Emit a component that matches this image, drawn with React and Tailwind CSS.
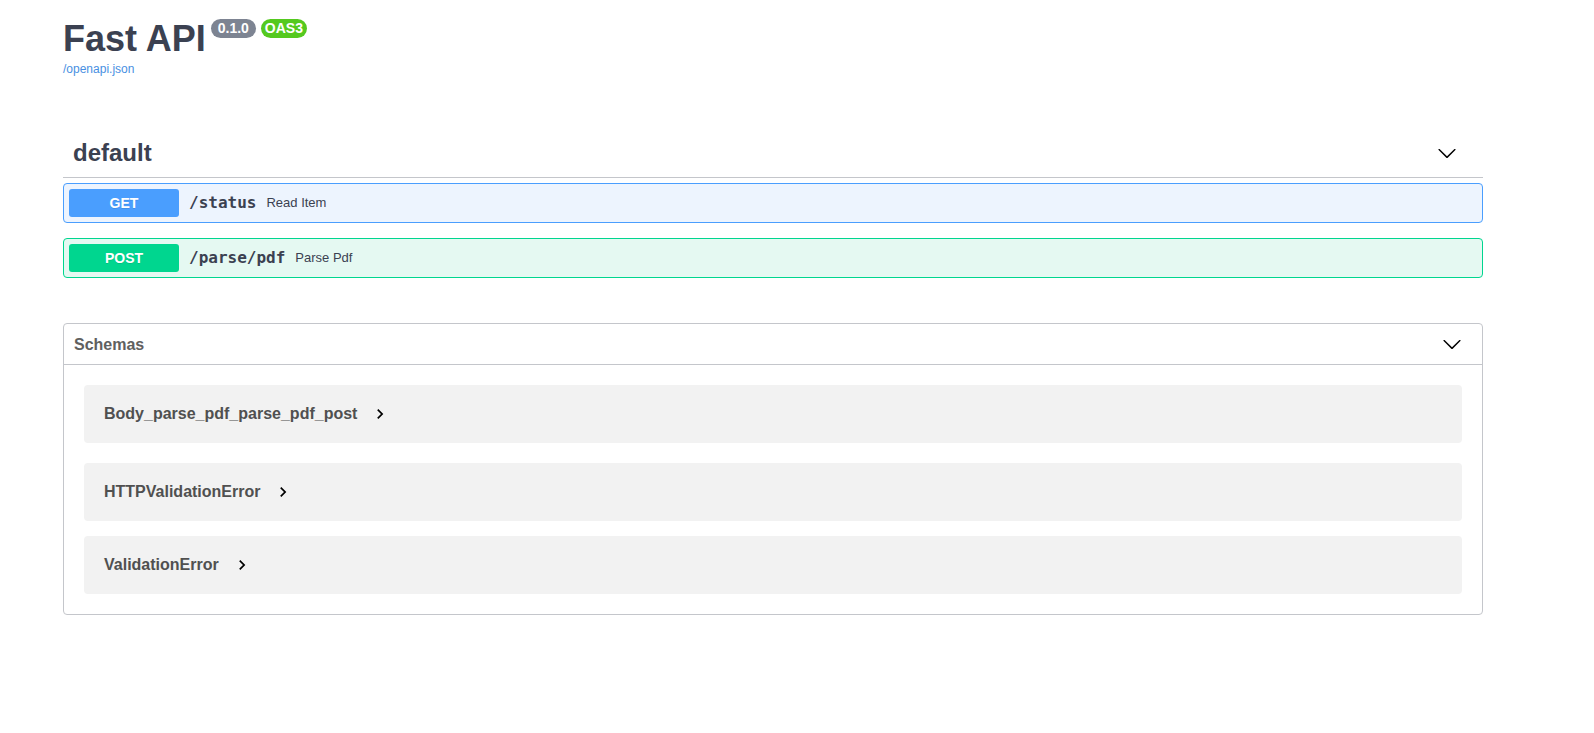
import React from "react";

const sans = { fontFamily: '"Liberation Sans", Arial, sans-serif' };

function DownArrow({ className }) {
  return (
    <svg width="20" height="20" viewBox="0 0 20 20" className={className} aria-hidden="true">
      <path
        fill="#000"
        d="M17.418 6.109c.272-.268.709-.268.979 0s.271.701 0 .969l-7.908 7.83c-.27.268-.707.268-.979 0l-7.908-7.83c-.27-.268-.27-.701 0-.969.271-.268.709-.268.979 0L10 13.25l7.418-7.141z"
      />
    </svg>
  );
}

function RightArrow() {
  return (
    <svg width="20" height="20" viewBox="0 0 24 24" className="ml-[13px] shrink-0" aria-hidden="true">
      <path fill="#000" d="M10 6 8.59 7.41 13.17 12l-4.58 4.59L10 18l6-6z" />
    </svg>
  );
}

function Op({ method, path, desc, btn, border, bg }) {
  return (
    <div className={`flex items-center rounded-[4px] border p-[5px] ${border} ${bg}`}>
      <div
        className={`flex h-[28px] w-[110px] shrink-0 items-center justify-center rounded-[3px] text-[14px] font-bold text-white ${btn}`}
        style={{ ...sans, textShadow: "0 1px 0 rgba(0,0,0,.1)" }}
      >
        {method}
      </div>
      <span
        className="px-[10px] text-[16px] font-semibold leading-[20px] text-[#3b4151]"
        style={{ fontFamily: '"DejaVu Sans Mono", monospace' }}
      >
        {path}
      </span>
      <span className="text-[13px] text-[#3b4151]" style={sans}>
        {desc}
      </span>
    </div>
  );
}

function Model({ name, className }) {
  return (
    <div className={`flex h-[58px] items-center rounded-[4px] bg-[#f2f2f2] pl-[20px] ${className}`}>
      <span className="text-[16px] font-bold text-[#505050]" style={sans}>
        {name}
      </span>
      <RightArrow />
    </div>
  );
}

export default function App() {
  return (
    <div className="min-h-[733px] w-full bg-white" style={sans}>
      <div className="ml-[63px] w-[1420px] pt-[18px]">
        <div className="flex items-start">
          <h2 className="text-[36px] font-bold leading-[41px] text-[#3b4151]">Fast API</h2>
          <span className="ml-[5px] mt-[1px] flex h-[19px] items-center rounded-full bg-[#7d8492] px-[7px] text-[14px] font-bold text-white">
            0.1.0
          </span>
          <span className="ml-[5px] mt-[1px] flex h-[19px] items-center rounded-full bg-[#55c91f] px-[4px] text-[14px] font-bold text-white">
            OAS3
          </span>
        </div>
        <a className="mt-[3px] block text-[12px] leading-[14px] text-[#4990e2]">/openapi.json</a>

        <div className="mt-[53px]">
          <h3 className="flex items-center justify-between border-b border-[#c4c6cb] py-[10px] pl-[10px] pr-[20px]">
            <span className="text-[24px] font-bold leading-[28px] text-[#3b4151]">default</span>
            <DownArrow className="mr-[6px]" />
          </h3>
          <div className="mt-[5px] flex flex-col gap-[15px]">
            <Op
              method="GET"
              path="/status"
              desc="Read Item"
              btn="bg-[#4a9efe]"
              border="border-[#4a9efe]"
              bg="bg-[#edf4fe]"
            />
            <Op
              method="POST"
              path="/parse/pdf"
              desc="Parse Pdf"
              btn="bg-[#00d68f]"
              border="border-[#00d68f]"
              bg="bg-[#e5f9f2]"
            />
          </div>
        </div>

        <section className="mt-[45px] rounded-[4px] border border-[#c4c6cb] pb-[20px]">
          <h4 className="flex items-center justify-between border-b border-[#c4c6cb] py-[10px] pl-[10px] pr-[20px]">
            <span className="text-[16px] font-bold leading-[19px] text-[#606060]">Schemas</span>
            <DownArrow />
          </h4>
          <div className="flex flex-col">
            <Model name="Body_parse_pdf_parse_pdf_post" className="m-[20px]" />
            <Model name="HTTPValidationError" className="mx-[20px] mb-[15px]" />
            <Model name="ValidationError" className="mx-[20px]" />
          </div>
        </section>
      </div>
    </div>
  );
}
